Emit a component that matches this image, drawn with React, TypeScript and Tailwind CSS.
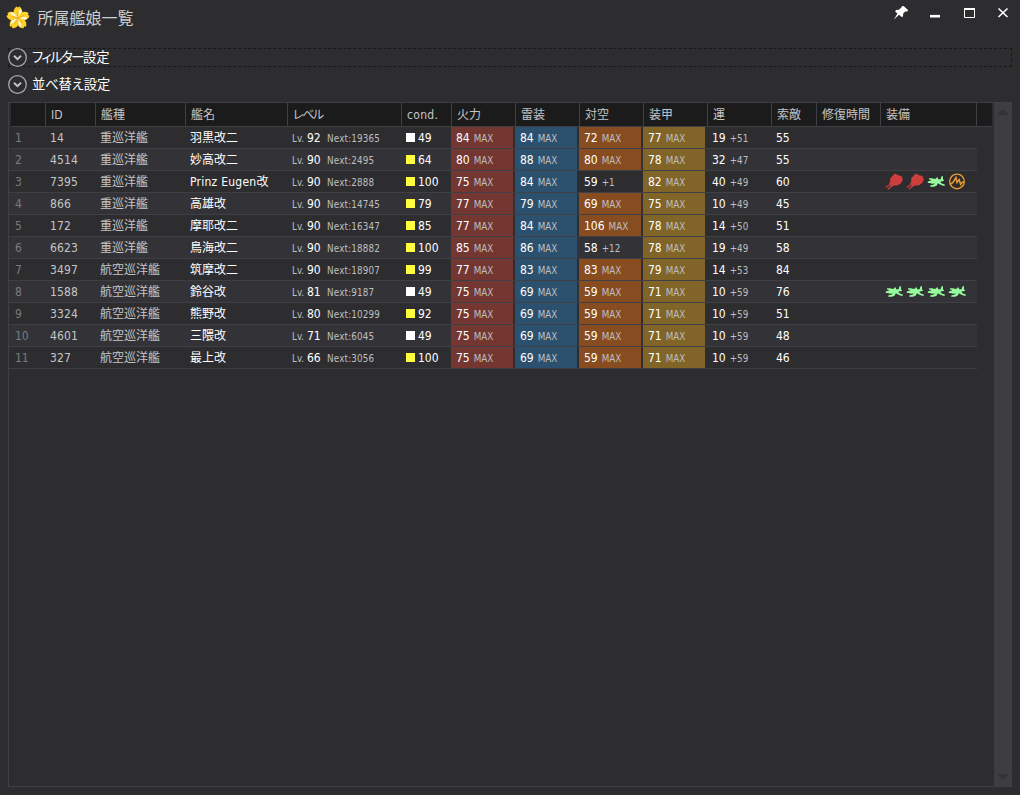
import type { ReactNode } from "react";

type Equip = "main" | "plane" | "radar";

interface Ship {
  id: number;
  type: string;
  name: string;
  level: number;
  next: number;
  cond: number;
  fire: number;
  torpedo: number;
  aa: number;
  aaUp?: string;
  armor: number;
  luck: number;
  luckUp: string;
  search: number;
  equips?: Equip[];
}

const SHIPS: Ship[] = [
  { id: 14, type: "重巡洋艦", name: "羽黒改二", level: 92, next: 19365, cond: 49, fire: 84, torpedo: 84, aa: 72, armor: 77, luck: 19, luckUp: "+51", search: 55 },
  { id: 4514, type: "重巡洋艦", name: "妙高改二", level: 90, next: 2495, cond: 64, fire: 80, torpedo: 88, aa: 80, armor: 78, luck: 32, luckUp: "+47", search: 55 },
  { id: 7395, type: "重巡洋艦", name: "Prinz Eugen改", level: 90, next: 2888, cond: 100, fire: 75, torpedo: 84, aa: 59, aaUp: "+1", armor: 82, luck: 40, luckUp: "+49", search: 60, equips: ["main", "main", "plane", "radar"] },
  { id: 866, type: "重巡洋艦", name: "高雄改", level: 90, next: 14745, cond: 79, fire: 77, torpedo: 79, aa: 69, armor: 75, luck: 10, luckUp: "+49", search: 45 },
  { id: 172, type: "重巡洋艦", name: "摩耶改二", level: 90, next: 16347, cond: 85, fire: 77, torpedo: 84, aa: 106, armor: 78, luck: 14, luckUp: "+50", search: 51 },
  { id: 6623, type: "重巡洋艦", name: "鳥海改二", level: 90, next: 18882, cond: 100, fire: 85, torpedo: 86, aa: 58, aaUp: "+12", armor: 78, luck: 19, luckUp: "+49", search: 58 },
  { id: 3497, type: "航空巡洋艦", name: "筑摩改二", level: 90, next: 18907, cond: 99, fire: 77, torpedo: 83, aa: 83, armor: 79, luck: 14, luckUp: "+53", search: 84 },
  { id: 1588, type: "航空巡洋艦", name: "鈴谷改", level: 81, next: 9187, cond: 49, fire: 75, torpedo: 69, aa: 59, armor: 71, luck: 10, luckUp: "+59", search: 76, equips: ["plane", "plane", "plane", "plane"] },
  { id: 3324, type: "航空巡洋艦", name: "熊野改", level: 80, next: 10299, cond: 92, fire: 75, torpedo: 69, aa: 59, armor: 71, luck: 10, luckUp: "+59", search: 51 },
  { id: 4601, type: "航空巡洋艦", name: "三隈改", level: 71, next: 6045, cond: 49, fire: 75, torpedo: 69, aa: 59, armor: 71, luck: 10, luckUp: "+59", search: 48 },
  { id: 327, type: "航空巡洋艦", name: "最上改", level: 66, next: 3056, cond: 100, fire: 75, torpedo: 69, aa: 59, armor: 71, luck: 10, luckUp: "+59", search: 46 },
];

const HEADERS = ["", "ID", "艦種", "艦名", "レベル", "cond.", "火力", "雷装", "対空", "装甲", "運", "索敵", "修復時間", "装備"];

function Flower() {
  return (
    <svg width="24" height="24" viewBox="-12 -12 24 24">
      {[0, 72, 144, 216, 288].map((deg) => (
        <g key={deg} transform={`rotate(${deg})`}>
          <path d="M0 0 L-3.8 -4.2 C-5 -7.5 -3.6 -9.8 -1.6 -11.6 L0 -10.4 L1.6 -11.6 C3.6 -9.8 5 -7.5 3.8 -4.2Z" fill="#fdd02a" />
          <path d="M0 -0.6 L1 -7.5 L2.6 -9 C3.8 -7.4 4 -5.8 3 -4Z" fill="#fff6d2" />
          <path d="M0 -0.5 L-0.6 -6.5" stroke="#eda51d" strokeWidth="0.7" />
        </g>
      ))}
    </svg>
  );
}

function Chevron() {
  return (
    <svg width="19" height="19" viewBox="0 0 19 19" fill="none">
      <circle cx="9.5" cy="9.5" r="8.8" stroke="#a8a8a8" strokeWidth="1.3" />
      <path d="M6 7.8 L9.5 11.2 L13 7.8" stroke="#c4c4c4" strokeWidth="2" />
    </svg>
  );
}

function EquipIcon({ kind }: { kind: Equip }) {
  if (kind === "main") {
    return (
      <svg width="18" height="18" viewBox="0 0 18 18">
        <path d="M9.8 0.6 L12 1.4 L13 2.2 L16.4 3 L17.9 6.6 L16.2 10 L13 12.2 L11 12.6 L8.6 12.6 L7.4 13.4 L5.4 12.6 L4 10.6 L5.2 9 L5.2 5.2 L8 2.6Z" fill="#ce3e3c" />
        <path d="M6.4 10.8 L0.6 14.6 M8 12 L2.8 16.2" stroke="#ce3e3c" strokeWidth="1.2" />
      </svg>
    );
  }
  if (kind === "plane") {
    return (
      <svg width="18" height="18" viewBox="0 0 18 18" fill="#96fb9c">
        <path d="M2 5.2 H5.8 V5.8 H8.8 L9.8 4.6 H11 V6.2 H13.6 L14.6 3.2 H16 V6.4 L17 7 V7.8 L13.2 8.8 L14.8 10.4 L17.8 11.4 V12.8 H16 L13 11.6 L10.8 10.2 L9.8 12.4 L7 13.8 H3.2 V12.4 L6.8 11.6 L7.8 10.6 L5 10.8 L2.8 10 H0.8 V8.4 L4 7.6 L3.6 6.8 L2 6.4Z" />
      </svg>
    );
  }
  return (
    <svg width="18" height="18" viewBox="0 0 18 18" fill="none" stroke="#e99b31">
      <circle cx="9" cy="8.4" r="7.3" strokeWidth="1.4" />
      <path d="M2 11.4 L5 9.4 L8 4.6 L9 9.4 L11.2 6.6 L12.6 11.4 L14.2 9.2 L16 9.2" strokeWidth="1.5" />
    </svg>
  );
}

function Cell({ children, className = "" }: { children?: ReactNode; className?: string }) {
  return <div className={`flex items-center whitespace-nowrap pl-[5px] ${className}`}>{children}</div>;
}

function Small({ children, className = "" }: { children: ReactNode; className?: string }) {
  return <span className={`pt-[2px] text-[9.75px] text-[#bfbfc0] ${className}`}>{children}</span>;
}

function Stat({ value, up, color = "" }: { value: number; up?: string; color?: string }) {
  return (
    <Cell className={`mr-[2px] text-white ${up ? "" : color}`}>
      {value}
      <Small className="ml-[4px]">{up ?? "MAX"}</Small>
    </Cell>
  );
}

function ShipRow({ ship, index }: { ship: Ship; index: number }) {
  return (
    <div
      className={`grid h-[22px] w-[968px] grid-cols-[36px_50px_90px_102px_114px_50px_64px_64px_64px_64px_64px_45px_64px_97px] border-b border-[#3f3f46] ${
        index % 2 ? "bg-[#333337]" : "bg-[#2d2d30]"
      }`}
    >
      <Cell className="pl-[6px] text-[#7b7b7c]">{index + 1}</Cell>
      <Cell className="tracking-[0.1px]">{ship.id}</Cell>
      <Cell>{ship.type}</Cell>
      <Cell className={`text-white ${/^[A-Z]/.test(ship.name) ? "tracking-[0.25px]" : ""}`}>{ship.name}</Cell>
      <Cell className="text-white">
        <Small className="w-[15px]">Lv.</Small>
        <span className="w-[20px]">{ship.level}</span>
        <Small className="tracking-[0.18px]">Next:{ship.next}</Small>
      </Cell>
      <Cell className="text-white">
        <span className={`mr-[3px] h-[9px] w-[9px] ${ship.cond === 49 ? "bg-white" : "bg-[#ffff40]"}`} />
        {ship.cond}
      </Cell>
      <Stat value={ship.fire} color="bg-[#733631]" />
      <Stat value={ship.torpedo} color="bg-[#2c516f]" />
      <Stat value={ship.aa} up={ship.aaUp} color="bg-[#874c20]" />
      <Stat value={ship.armor} color="bg-[#816427]" />
      <Stat value={ship.luck} up={ship.luckUp} />
      <Cell className="text-white">{ship.search}</Cell>
      <Cell />
      <Cell className="gap-[3px]">
        {ship.equips?.map((kind, i) => <EquipIcon key={i} kind={kind} />)}
      </Cell>
    </div>
  );
}

export default function App() {
  return (
    <div className="flex h-[795px] w-[1020px] flex-col overflow-hidden bg-[#2d2d30] px-2 font-['DejaVu_Sans_Condensed','DejaVu_Sans','Noto_Sans_CJK_JP',sans-serif] text-[12px] leading-none text-[#c5c5c6] font-stretch-condensed">
      {/* Title bar */}
      <div className="flex h-[48px] shrink-0 items-start justify-between">
        <div className="-ml-[2px] flex items-center pt-[6px]">
          <Flower />
          <h1 className="ml-[7.5px] pt-[2px] text-[16px] text-[#cfcfcf]">所属艦娘一覧</h1>
        </div>
        <svg width="120" height="24" viewBox="0 0 120 24" fill="none">
          <path d="M11.6 6 L16 10 L15.4 11.4 L13.2 11.6 L11.2 13.6 L11 16.4 L9.6 17 L7 14.8 L2 19.6 L5.4 13.4 L3 11.2 L4.2 10 L6.8 9.8 L9.2 7.8 L9.6 6.4Z" fill="#fff" />
          <path d="M38 16.2 H48" stroke="#fff" strokeWidth="2.6" />
          <path d="M72.5 9 V17.5 H82.5 V9" stroke="#fff" />
          <path d="M72 9 H83" stroke="#fff" strokeWidth="2" />
          <path d="M106.5 8.5 L115.5 17 M115.5 8.5 L106.5 17" stroke="#fff" strokeWidth="1.6" />
        </svg>
      </div>

      {/* Expanders */}
      <div className="flex h-[19px] shrink-0 items-center border border-dashed border-[#19191a] text-[13.33px] text-white">
        <span className="-ml-px"><Chevron /></span>
        <span className="ml-[5px] [font-feature-settings:'palt']">
          <span className="tracking-[-1.5px]">フィルター</span>設定
        </span>
      </div>
      <div className="mt-2 flex h-[19px] shrink-0 items-center text-[13.33px] text-white">
        <Chevron />
        <span className="ml-[5px] tracking-[-0.15px] [font-feature-settings:'palt']">並べ替え設定</span>
      </div>

      {/* Ship list */}
      <div className="mt-[8px] flex h-[685px] w-[1004px] shrink-0 border-b border-l border-t border-[#3f3f46]">
        <div className="w-[985px]">
          <div className="ml-[2px] grid h-[24px] w-[981px] grid-cols-[35px_50px_90px_102px_114px_50px_64px_64px_64px_64px_64px_45px_64px_96px_15px] border-b border-[#3f3f46] bg-[#1b1b1c]">
            {HEADERS.map((label, i) => (
              <Cell
                key={label}
                className={`border-r border-[#3f3f46] ${i === 4 ? "tracking-[-1.5px] [font-feature-settings:'palt']" : ""} ${i === 5 ? "tracking-[0.3px]" : ""}`}
              >
                {label}
              </Cell>
            ))}
          </div>
          {SHIPS.map((ship, i) => (
            <ShipRow key={ship.id} ship={ship} index={i} />
          ))}
        </div>
        <div className="flex w-[18px] flex-col items-center justify-between bg-[#3e3e42] pb-[6px] pt-[6px]">
          <svg width="12" height="6" viewBox="0 0 12 6" fill="#333337"><path d="M6 0 L12 6 H0Z" /></svg>
          <svg width="12" height="6" viewBox="0 0 12 6" fill="#333337"><path d="M0 0 H12 L6 6Z" /></svg>
        </div>
      </div>
    </div>
  );
}
